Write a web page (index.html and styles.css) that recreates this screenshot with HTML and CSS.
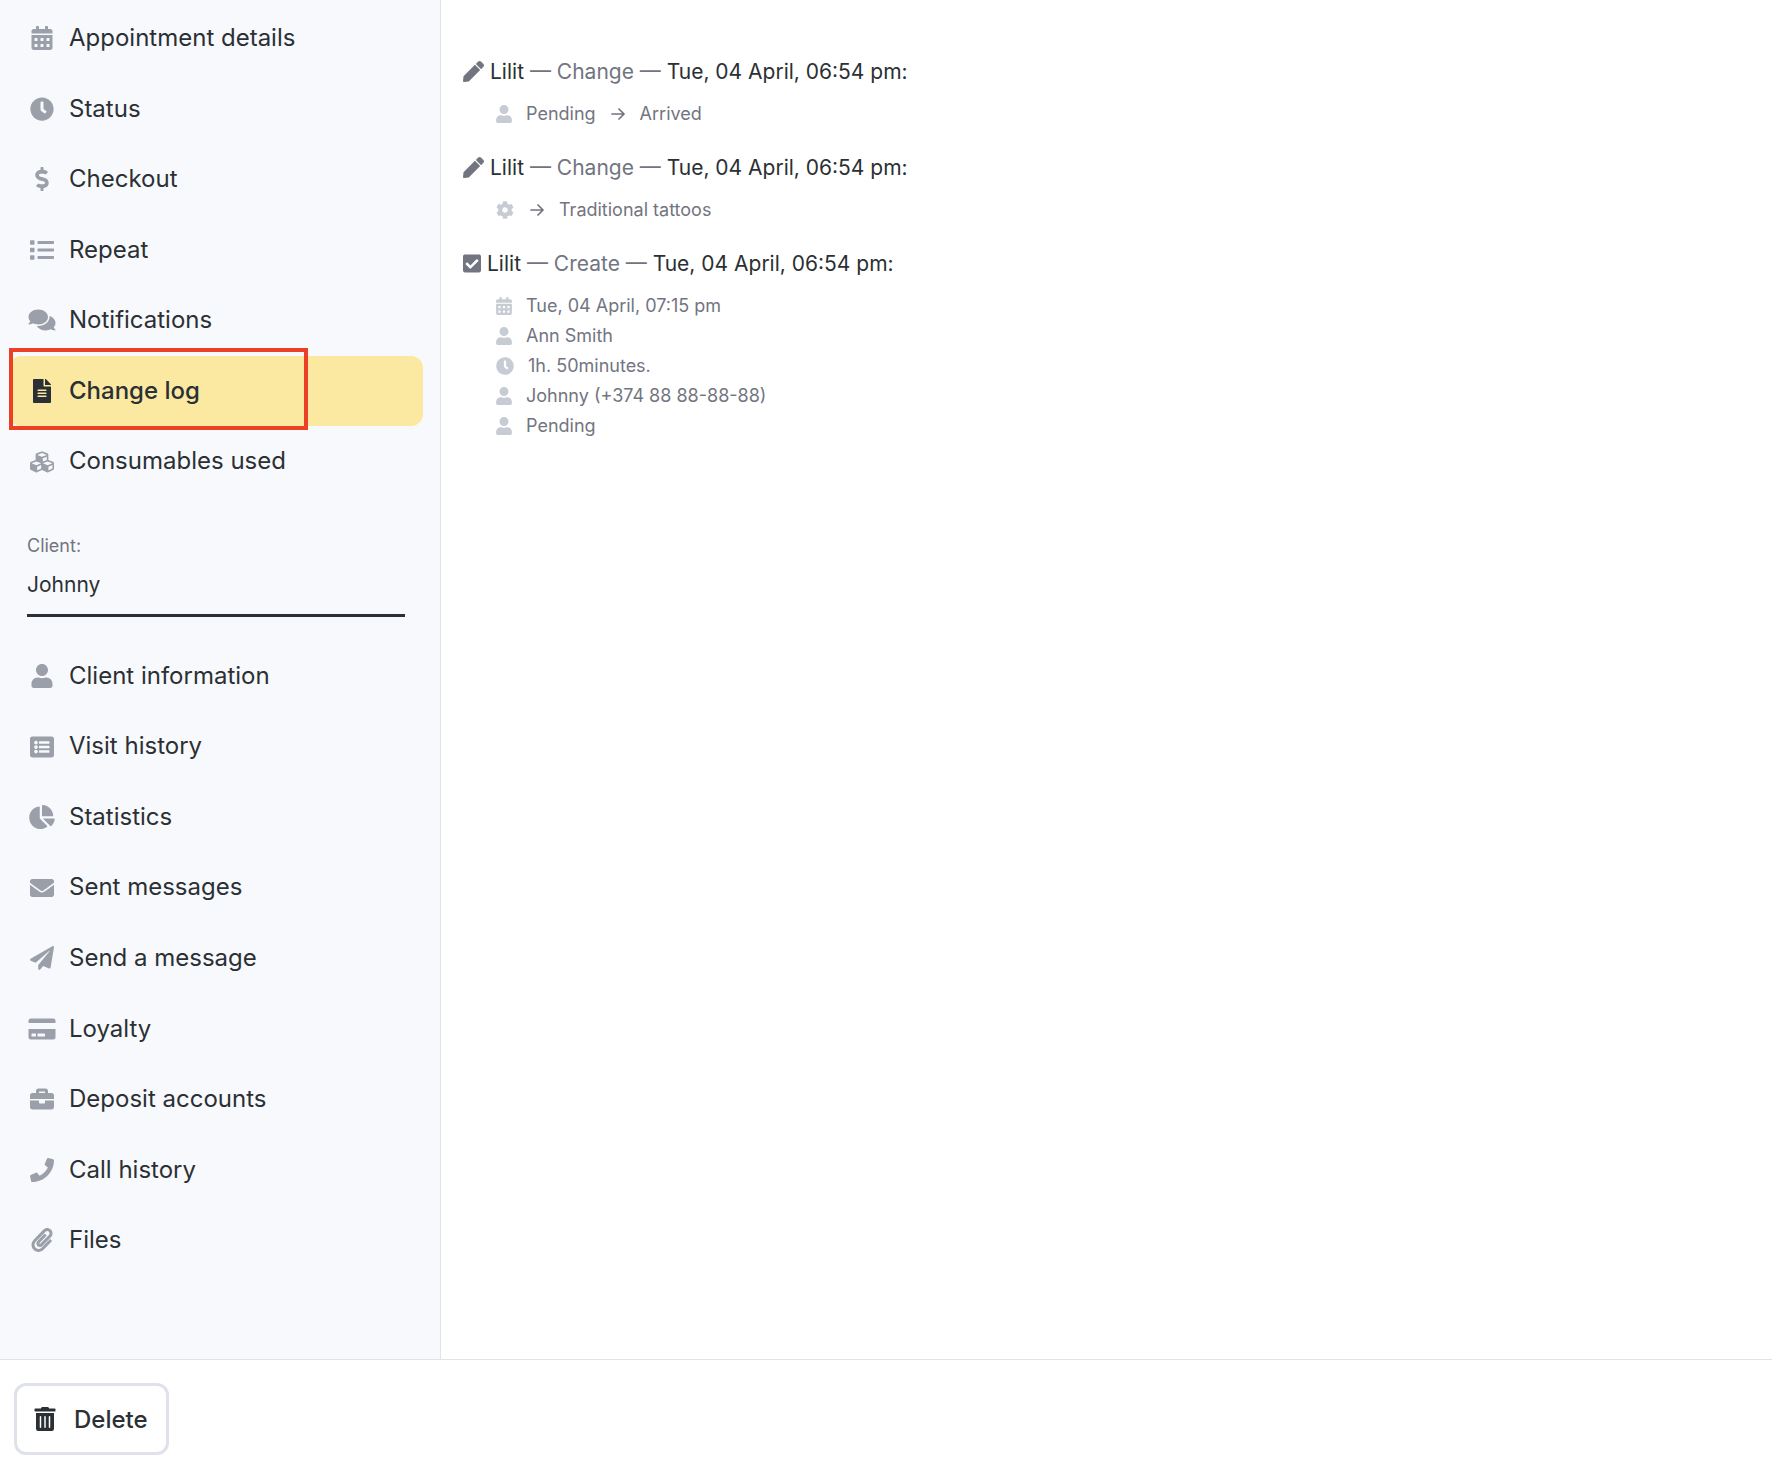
FILE: index.html
```html
<!DOCTYPE html>
<html lang="en">
<head>
  <meta charset="utf-8">
  <meta name="viewport" content="width=device-width, initial-scale=1">
  <title>Appointment - Change log</title>
  <link rel="stylesheet" href="styles.css">
</head>
<body>
  <!-- Icon set -->
  <svg class="sprite" aria-hidden="true">
    <symbol id="calendar" viewBox="0 0 448 512"><path d="M0 464c0 26.500 21.500 48 48 48h352c26.500 0 48-21.500 48-48V192H0v272zm320-196c0-6.600 5.400-12 12-12h40c6.600 0 12 5.400 12 12v40c0 6.600-5.400 12-12 12h-40c-6.600 0-12-5.400-12-12v-40zm0 128c0-6.600 5.400-12 12-12h40c6.600 0 12 5.400 12 12v40c0 6.600-5.400 12-12 12h-40c-6.600 0-12-5.400-12-12v-40zM192 268c0-6.600 5.400-12 12-12h40c6.600 0 12 5.400 12 12v40c0 6.600-5.400 12-12 12h-40c-6.600 0-12-5.400-12-12v-40zm0 128c0-6.600 5.400-12 12-12h40c6.600 0 12 5.400 12 12v40c0 6.600-5.400 12-12 12h-40c-6.600 0-12-5.400-12-12v-40zM64 268c0-6.600 5.400-12 12-12h40c6.600 0 12 5.400 12 12v40c0 6.600-5.400 12-12 12H76c-6.600 0-12-5.400-12-12v-40zm0 128c0-6.600 5.400-12 12-12h40c6.600 0 12 5.400 12 12v40c0 6.600-5.400 12-12 12H76c-6.600 0-12-5.400-12-12v-40zM400 64h-48V16c0-8.800-7.200-16-16-16h-32c-8.800 0-16 7.200-16 16v48H160V16c0-8.800-7.200-16-16-16h-32c-8.800 0-16 7.200-16 16v48H48C21.500 64 0 85.500 0 112v48h448v-48c0-26.500-21.500-48-48-48z"/></symbol>
    <symbol id="clock" viewBox="0 0 512 512"><path d="M256,8C119,8,8,119,8,256S119,504,256,504,504,393,504,256,393,8,256,8Zm92.490,313h0l-20,25a16,16,0,0,1-22.490,2.500h0l-67-49.720a40,40,0,0,1-15-31.230V112a16,16,0,0,1,16-16h32a16,16,0,0,1,16,16V256l58,42.500A16,16,0,0,1,348.490,321Z"/></symbol>
    <symbol id="dollar" viewBox="0 0 288 512"><path d="M209.200 233.400l-108-31.600C88.700 198.200 80 186.500 80 173.500c0-16.300 13.200-29.500 29.500-29.500h66.300c12.200 0 24.200 3.700 34.200 10.500 6.100 4.100 14.300 3.100 19.500-2l34.800-34c7.100-6.900 6.100-18.400-1.800-24.500C238 74.800 207.400 64.100 176 64V16c0-8.800-7.200-16-16-16h-32c-8.800 0-16 7.200-16 16v48h-2.500C45.800 64-5.400 118.700.5 183.600c4.200 46.100 39.400 83.600 83.800 96.600l102.500 30c12.500 3.700 21.200 15.300 21.200 28.300 0 16.300-13.200 29.500-29.500 29.500h-66.300C100 368 88 364.300 78 357.500c-6.100-4.100-14.300-3.100-19.500 2l-34.800 34c-7.100 6.900-6.100 18.400 1.800 24.500 24.500 19.200 55.100 29.900 86.500 30v48c0 8.800 7.200 16 16 16h32c8.800 0 16-7.200 16-16v-48.200c46.600-.9 90.300-28.600 105.700-72.700 21.500-61.600-14.600-124.800-72.500-141.700z"/></symbol>
    <symbol id="list" viewBox="0 0 512 512"><path d="M80 368H16a16 16 0 0 0-16 16v64a16 16 0 0 0 16 16h64a16 16 0 0 0 16-16v-64a16 16 0 0 0-16-16zm0-320H16A16 16 0 0 0 0 64v64a16 16 0 0 0 16 16h64a16 16 0 0 0 16-16V64a16 16 0 0 0-16-16zm0 160H16a16 16 0 0 0-16 16v64a16 16 0 0 0 16 16h64a16 16 0 0 0 16-16v-64a16 16 0 0 0-16-16zm416 176H176a16 16 0 0 0-16 16v32a16 16 0 0 0 16 16h320a16 16 0 0 0 16-16v-32a16 16 0 0 0-16-16zm0-320H176a16 16 0 0 0-16 16v32a16 16 0 0 0 16 16h320a16 16 0 0 0 16-16V80a16 16 0 0 0-16-16zm0 160H176a16 16 0 0 0-16 16v32a16 16 0 0 0 16 16h320a16 16 0 0 0 16-16v-32a16 16 0 0 0-16-16z"/></symbol>
    <symbol id="comments" viewBox="0 0 576 512"><path d="M416 192c0-88.400-93.100-160-208-160S0 103.600 0 192c0 34.300 14.100 65.900 38 92-13.400 30.200-35.500 54.200-35.800 54.500-2.200 2.300-2.800 5.700-1.500 8.700S4.800 352 8 352c36.600 0 66.900-12.300 88.700-25 32.200 15.700 70.300 25 111.300 25 114.900 0 208-71.600 208-160zm122 220c23.900-26 38-57.700 38-92 0-66.900-53.500-124.200-129.300-148.100.9 6.600 1.300 13.300 1.300 20.100 0 105.900-107.700 192-240 192-10.800 0-21.300-.8-31.700-1.900C207.800 439.600 281.800 480 368 480c41 0 79.100-9.200 111.300-25 21.800 12.700 52.100 25 88.700 25 3.200 0 6.100-1.900 7.300-4.800 1.300-2.900.7-6.300-1.500-8.700-.3-.3-22.400-24.200-35.800-54.500z"/></symbol>
    <symbol id="file" viewBox="0 0 384 512"><path d="M224 136V0H24C10.700 0 0 10.700 0 24v464c0 13.300 10.700 24 24 24h336c13.300 0 24-10.700 24-24V160H248c-13.200 0-24-10.800-24-24zm64 236c0 6.600-5.400 12-12 12H108c-6.600 0-12-5.400-12-12v-8c0-6.600 5.400-12 12-12h168c6.600 0 12 5.400 12 12v8zm0-64c0 6.600-5.400 12-12 12H108c-6.600 0-12-5.400-12-12v-8c0-6.600 5.400-12 12-12h168c6.600 0 12 5.400 12 12v8zm0-72v8c0 6.600-5.400 12-12 12H108c-6.600 0-12-5.400-12-12v-8c0-6.600 5.400-12 12-12h168c6.600 0 12 5.400 12 12zm96-114.100v6.100H256V0h6.100c6.400 0 12.500 2.500 17 7l97.900 98c4.500 4.500 7 10.600 7 16.900z"/></symbol>
    <symbol id="cubes" viewBox="0 0 512 512"><path d="M488.600 250.200L392 214V105.500c0-15-9.300-28.400-23.400-33.700l-100-37.500c-8.100-3.100-17.100-3.100-25.300 0l-100 37.500c-14.100 5.300-23.400 18.700-23.400 33.700V214l-96.600 36.200C9.300 255.500 0 268.900 0 283.900V394c0 13.600 7.700 26.100 19.900 32.200l100 50c10.100 5.100 22.100 5.100 32.200 0l103.900-52 103.900 52c10.100 5.100 22.100 5.100 32.200 0l100-50c12.200-6.100 19.900-18.600 19.900-32.200V283.900c0-15-9.300-28.400-23.400-33.700zM358 214.800l-85 31.900v-68.200l85-37v73.300zM154 104.100l102-38.200 102 38.200v.6l-102 41.400-102-41.400v-.6zm84 291.100l-85 42.500v-79.100l85-38.800v75.400zm0-112l-102 41.400-102-41.400v-.6l102-38.200 102 38.200v.6zm240 112l-85 42.500v-79.100l85-38.800v75.400zm0-112l-102 41.400-102-41.400v-.6l102-38.200 102 38.200v.6z"/></symbol>
    <symbol id="user" viewBox="0 0 448 512"><path d="M224 256c70.700 0 128-57.300 128-128S294.700 0 224 0 96 57.300 96 128s57.300 128 128 128zm89.600 32h-16.700c-22.200 10.200-46.900 16-72.900 16s-50.600-5.800-72.900-16h-16.700C60.200 288 0 348.200 0 422.400V464c0 26.500 21.500 48 48 48h352c26.500 0 48-21.500 48-48v-41.600c0-74.200-60.200-134.400-134.400-134.400z"/></symbol>
    <symbol id="list-alt" viewBox="0 0 512 512"><path d="M464 480H48c-26.510 0-48-21.490-48-48V80c0-26.510 21.490-48 48-48h416c26.510 0 48 21.490 48 48v352c0 26.510-21.490 48-48 48zM128 120c-22.091 0-40 17.909-40 40s17.909 40 40 40 40-17.909 40-40-17.909-40-40-40zm0 96c-22.091 0-40 17.909-40 40s17.909 40 40 40 40-17.909 40-40-17.909-40-40-40zm0 96c-22.091 0-40 17.909-40 40s17.909 40 40 40 40-17.909 40-40-17.909-40-40-40zm288-136v-32c0-6.627-5.373-12-12-12H204c-6.627 0-12 5.373-12 12v32c0 6.627 5.373 12 12 12h200c6.627 0 12-5.373 12-12zm0 96v-32c0-6.627-5.373-12-12-12H204c-6.627 0-12 5.373-12 12v32c0 6.627 5.373 12 12 12h200c6.627 0 12-5.373 12-12zm0 96v-32c0-6.627-5.373-12-12-12H204c-6.627 0-12 5.373-12 12v32c0 6.627 5.373 12 12 12h200c6.627 0 12-5.373 12-12z"/></symbol>
    <symbol id="chart" viewBox="0 0 544 512"><path d="M527.790 288H290.500l158.030 158.030c6.040 6.040 15.980 6.530 22.190.68 38.700-36.460 65.320-85.610 73.130-140.860 1.340-9.460-6.510-17.850-16.060-17.850zm-15.830-64.800C503.720 103.740 408.260 8.280 288.800.04 279.680-.59 272 7.100 272 16.240V240h223.770c9.140 0 16.820-7.680 16.190-16.800zM224 288V50.710c0-9.550-8.390-17.400-17.840-16.060C86.990 51.490-4.100 155.600.14 280.370 4.500 408.510 114.830 513.590 243.030 511.980c50.400-.63 96.970-16.870 135.260-44.030 7.900-5.600 8.420-17.230 1.570-24.080L224 288z"/></symbol>
    <symbol id="envelope" viewBox="0 0 512 512"><path d="M502.300 190.800c3.900-3.100 9.700-.2 9.700 4.700V400c0 26.500-21.500 48-48 48H48c-26.500 0-48-21.500-48-48V195.600c0-5 5.700-7.800 9.700-4.700 22.400 17.400 52.100 39.500 154.100 113.600 21.100 15.400 56.700 47.800 92.200 47.600 35.700.3 72-32.800 92.300-47.600 102-74.100 131.600-96.300 154-113.700zM256 320c23.200.4 56.600-29.200 73.400-41.400 132.700-96.300 142.800-104.700 173.400-128.700 5.800-4.500 9.200-11.500 9.200-18.900v-19c0-26.500-21.500-48-48-48H48c-26.500 0-48 21.500-48 48v19c0 7.400 3.400 14.300 9.200 18.900 30.600 23.900 40.700 32.400 173.400 128.700 16.800 12.200 50.200 41.800 73.400 41.400z"/></symbol>
    <symbol id="plane" viewBox="0 0 512 512"><path d="M476 3.200L12.500 270.600c-18.100 10.400-15.800 35.600 2.200 43.200L121 358.400l287.300-253.200c5.500-4.900 13.300 2.600 8.600 8.300L176 407v80.500c0 23.600 28.500 32.900 42.500 15.800L282 426l124.600 52.200c14.200 6 30.400-2.900 33-18.200l72-432C515 7.800 493.300-6.800 476 3.200z"/></symbol>
    <symbol id="card" viewBox="0 0 576 512"><path d="M0 432c0 26.500 21.500 48 48 48h480c26.500 0 48-21.500 48-48V256H0v176zm192-68c0-6.600 5.400-12 12-12h136c6.600 0 12 5.400 12 12v40c0 6.600-5.400 12-12 12H204c-6.600 0-12-5.400-12-12v-40zm-128 0c0-6.600 5.400-12 12-12h72c6.600 0 12 5.400 12 12v40c0 6.600-5.400 12-12 12H76c-6.600 0-12-5.400-12-12v-40zM576 80v48H0V80c0-26.500 21.500-48 48-48h480c26.500 0 48 21.500 48 48z"/></symbol>
    <symbol id="briefcase" viewBox="0 0 512 512"><path d="M320 336c0 8.840-7.160 16-16 16h-96c-8.840 0-16-7.160-16-16v-48H0v144c0 25.600 22.400 48 48 48h416c25.600 0 48-22.400 48-48V288H320v48zm144-208h-80V80c0-25.600-22.400-48-48-48H176c-25.600 0-48 22.400-48 48v48H48c-25.600 0-48 22.400-48 48v80h512v-80c0-25.600-22.400-48-48-48zm-144 0H192V96h128v32z"/></symbol>
    <symbol id="phone" viewBox="0 0 512 512"><path d="M493.400 24.600l-104-24c-11.300-2.600-22.900 3.300-27.500 13.900l-48 112c-4.200 9.800-1.400 21.300 6.900 28l60.600 49.600c-36 76.700-98.900 140.500-177.200 177.200l-49.600-60.600c-6.800-8.300-18.200-11.100-28-6.900l-112 48C3.900 366.500-2 378.100.6 389.400l24 104C27.100 504.200 36.700 512 48 512c256.100 0 464-207.500 464-464 0-11.200-7.700-20.900-18.600-23.400z"/></symbol>
    <symbol id="paperclip" viewBox="0 0 448 512"><path d="M43.246 466.142c-58.430-60.289-57.341-157.511 1.386-217.581L254.392 34c44.316-45.332 116.351-45.336 160.671 0 43.890 44.894 43.943 117.329 0 162.276L232.214 383.128c-29.855 30.537-78.633 30.111-107.982-.998-28.275-29.970-27.368-77.473 1.452-106.953l143.743-146.835c6.182-6.314 16.312-6.422 22.626-.241l22.861 22.379c6.315 6.182 6.422 16.312.241 22.626L171.427 319.927c-4.932 5.045-5.236 13.428-.648 18.292 4.372 4.634 11.245 4.711 15.688.165l182.849-186.851c19.613-20.062 19.613-52.725-.011-72.798-19.189-19.627-49.957-19.637-69.154 0L90.390 293.295c-34.763 35.560-35.299 93.120-1.191 128.313 34.010 35.093 88.985 35.137 123.058.286l172.060-175.999c6.177-6.319 16.307-6.433 22.626-.256l22.877 22.364c6.319 6.177 6.434 16.307.256 22.626l-172.060 175.998c-59.576 60.938-155.943 60.216-214.770-.485z"/></symbol>
    <symbol id="trash" viewBox="0 0 448 512"><path d="M32 464a48 48 0 0 0 48 48h288a48 48 0 0 0 48-48V128H32zm272-256a16 16 0 0 1 32 0v224a16 16 0 0 1-32 0zm-96 0a16 16 0 0 1 32 0v224a16 16 0 0 1-32 0zm-96 0a16 16 0 0 1 32 0v224a16 16 0 0 1-32 0zM432 32H312l-9.400-18.700A24 24 0 0 0 281.100 0H166.800a23.720 23.720 0 0 0-21.400 13.300L136 32H16A16 16 0 0 0 0 48v32a16 16 0 0 0 16 16h416a16 16 0 0 0 16-16V48a16 16 0 0 0-16-16z"/></symbol>
    <symbol id="pen" viewBox="0 0 512 512"><path d="M290.740 93.240l128.020 128.020-277.990 277.990-114.140 12.600C11.350 513.540-1.560 500.620.14 485.340l12.700-114.220 277.900-277.880zm207.200-19.060l-60.110-60.110c-18.750-18.750-49.160-18.750-67.910 0l-56.550 56.550 128.020 128.020 56.550-56.550c18.750-18.760 18.750-49.160 0-67.910z"/></symbol>
    <symbol id="check" viewBox="0 0 448 512"><path d="M400 480H48c-26.510 0-48-21.490-48-48V80c0-26.510 21.490-48 48-48h352c26.510 0 48 21.490 48 48v352c0 26.510-21.490 48-48 48zm-204.686-98.059l184-184c6.248-6.248 6.248-16.379 0-22.627l-22.627-22.627c-6.248-6.248-16.379-6.249-22.628 0L184 302.745l-70.059-70.059c-6.248-6.248-16.379-6.248-22.628 0l-22.627 22.627c-6.248 6.248-6.248 16.379 0 22.627l104 104c6.249 6.250 16.379 6.250 22.628.001z"/></symbol>
    <symbol id="cog" viewBox="0 0 512 512"><path d="M487.400 315.700l-42.600-24.600c4.300-23.200 4.300-47 0-70.200l42.600-24.600c4.900-2.800 7.100-8.600 5.500-14-11.100-35.600-30-67.800-54.700-94.600-3.800-4.100-10-5.100-14.800-2.300L380.800 110c-17.900-15.400-38.500-27.300-60.800-35.100V25.800c0-5.600-3.900-10.500-9.400-11.700-36.700-8.200-74.300-7.800-109.200 0-5.500 1.200-9.400 6.100-9.400 11.700V75c-22.200 7.900-42.800 19.800-60.800 35.100L88.700 85.500c-4.900-2.800-11-1.900-14.800 2.300-24.700 26.700-43.600 58.900-54.700 94.600-1.700 5.400.6 11.200 5.500 14L67.300 221c-4.300 23.200-4.300 47 0 70.200l-42.600 24.600c-4.900 2.800-7.100 8.600-5.500 14 11.100 35.600 30 67.800 54.700 94.600 3.800 4.100 10 5.100 14.800 2.300l42.600-24.600c17.900 15.400 38.500 27.300 60.800 35.100v49.200c0 5.600 3.900 10.500 9.400 11.700 36.700 8.200 74.300 7.800 109.200 0 5.500-1.200 9.400-6.100 9.400-11.700v-49.200c22.200-7.900 42.800-19.800 60.800-35.100l42.600 24.600c4.900 2.800 11 1.900 14.800-2.300 24.700-26.700 43.600-58.900 54.700-94.600 1.500-5.500-.7-11.300-5.600-14.100zM256 336c-44.100 0-80-35.900-80-80s35.900-80 80-80 80 35.900 80 80-35.900 80-80 80z"/></symbol>
    <symbol id="arrow" viewBox="0 0 14 18"><path d="M1 9h12M8 4l5 5-5 5" fill="none" stroke="currentColor" stroke-width="1.700" stroke-linecap="round" stroke-linejoin="round"/></symbol>
  </svg>

  <div class="layout">
    <!-- Sidebar -->
    <aside class="sidebar">
      <nav class="menu">
        <a class="menu-item" href="#"><svg class="menu-icon"><use href="#calendar"/></svg>Appointment details</a>
        <a class="menu-item" href="#"><svg class="menu-icon"><use href="#clock"/></svg>Status</a>
        <a class="menu-item" href="#"><svg class="menu-icon"><use href="#dollar"/></svg>Checkout</a>
        <a class="menu-item" href="#"><svg class="menu-icon"><use href="#list"/></svg>Repeat</a>
        <a class="menu-item" href="#"><svg class="menu-icon"><use href="#comments"/></svg>Notifications</a>
        <a class="menu-item active" href="#"><svg class="menu-icon"><use href="#file"/></svg>Change log<span class="marker"></span></a>
        <a class="menu-item" href="#"><svg class="menu-icon"><use href="#cubes"/></svg>Consumables used</a>
      </nav>

      <div class="client">
        <label class="client-label" for="client">Client:</label>
        <input class="client-input" id="client" type="text" value="Johnny">
      </div>

      <nav class="menu">
        <a class="menu-item" href="#"><svg class="menu-icon"><use href="#user"/></svg>Client information</a>
        <a class="menu-item" href="#"><svg class="menu-icon"><use href="#list-alt"/></svg>Visit history</a>
        <a class="menu-item" href="#"><svg class="menu-icon"><use href="#chart"/></svg>Statistics</a>
        <a class="menu-item" href="#"><svg class="menu-icon"><use href="#envelope"/></svg>Sent messages</a>
        <a class="menu-item" href="#"><svg class="menu-icon"><use href="#plane"/></svg>Send a message</a>
        <a class="menu-item" href="#"><svg class="menu-icon"><use href="#card"/></svg>Loyalty</a>
        <a class="menu-item" href="#"><svg class="menu-icon"><use href="#briefcase"/></svg>Deposit accounts</a>
        <a class="menu-item" href="#"><svg class="menu-icon"><use href="#phone"/></svg>Call history</a>
        <a class="menu-item" href="#"><svg class="menu-icon"><use href="#paperclip"/></svg>Files</a>
      </nav>
    </aside>

    <!-- Change log -->
    <main class="log">
      <section class="entry">
        <p class="entry-title"><svg class="title-icon"><use href="#pen"/></svg><span>Lilit <span class="muted">— Change —</span> Tue, 04 April, 06:54 pm:</span></p>
        <ul class="entry-rows">
          <li class="row"><svg class="row-icon"><use href="#user"/></svg>Pending<svg class="arrow"><use href="#arrow"/></svg>Arrived</li>
        </ul>
      </section>

      <section class="entry">
        <p class="entry-title"><svg class="title-icon"><use href="#pen"/></svg><span>Lilit <span class="muted">— Change —</span> Tue, 04 April, 06:54 pm:</span></p>
        <ul class="entry-rows">
          <li class="row"><svg class="row-icon wide"><use href="#cog"/></svg><svg class="arrow first"><use href="#arrow"/></svg>Traditional tattoos</li>
        </ul>
      </section>

      <section class="entry">
        <p class="entry-title"><svg class="title-icon narrow"><use href="#check"/></svg><span>Lilit <span class="muted">— Create —</span> Tue, 04 April, 06:54 pm:</span></p>
        <ul class="entry-rows">
          <li class="row"><svg class="row-icon"><use href="#calendar"/></svg>Tue, 04 April, 07:15 pm</li>
          <li class="row"><svg class="row-icon"><use href="#user"/></svg>Ann Smith</li>
          <li class="row"><svg class="row-icon wide"><use href="#clock"/></svg>1h. 50minutes.</li>
          <li class="row"><svg class="row-icon"><use href="#user"/></svg>Johnny (+374 88 88-88-88)</li>
          <li class="row"><svg class="row-icon"><use href="#user"/></svg>Pending</li>
        </ul>
      </section>
    </main>
  </div>

  <footer class="footer">
    <button class="delete-button" type="button"><svg class="menu-icon"><use href="#trash"/></svg>Delete</button>
  </footer>
</body>
</html>
```
FILE: styles.css
```css
* {
  box-sizing: border-box;
}

body {
  display: flex;
  flex-direction: column;
  min-height: 100vh;
  margin: 0;
  font-family: Inter, sans-serif;
  color: #2b3034;
  background: #fff;
}

svg {
  flex: none;
  fill: currentColor;
}

.sprite {
  display: none;
}

.layout {
  display: flex;
  flex: 1;
}

/* Sidebar */
.sidebar {
  flex: 0 0 441px;
  padding: 3px 17px 60px 9px;
  background: #f8f9fd;
  border-right: 1px solid #e1e3e6;
}

.menu-item {
  position: relative;
  display: flex;
  align-items: center;
  gap: 12px;
  padding: 18px;
  border-radius: 12px;
  font-size: 24px;
  line-height: 1.44;
  color: inherit;
  text-decoration: none;
}

.menu-icon {
  width: 30px;
  height: 24px;
}

.menu-item .menu-icon {
  color: #9a9fa9;
}

.menu-item.active {
  background: #fbe9a2;
  font-weight: 500;
}

.menu-item.active .menu-icon {
  color: #2b3034;
}

.marker {
  position: absolute;
  top: -8px;
  left: 0;
  width: 299px;
  height: 82px;
  border: 4px solid #eb4026;
}

.client {
  margin: 37px 18px 24px;
}

.client-label {
  display: block;
  font-size: 18px;
  line-height: 24px;
  color: #72757f;
}

.client-input {
  display: block;
  width: 100%;
  padding: 11px 0 13px;
  border: none;
  border-bottom: 3px solid #2b3034;
  border-radius: 0;
  background: none;
  font-family: inherit;
  font-size: 21px;
  line-height: 32px;
  color: inherit;
  outline: none;
}

/* Change log */
.log {
  flex: 1;
  padding: 57px 22px;
}

.entry {
  margin-bottom: 24px;
}

.entry-title {
  display: flex;
  align-items: center;
  gap: 6px;
  margin: 0 0 12px;
  font-size: 21px;
  line-height: 30px;
}

.title-icon {
  width: 21px;
  height: 21px;
  margin-bottom: 2px;
  color: #72757f;
}

.title-icon.narrow {
  width: 18px;
}

.muted {
  color: #72757f;
}

.entry-rows {
  margin: 0;
  padding: 0 0 0 33px;
  list-style: none;
}

.row {
  display: flex;
  align-items: center;
  font-size: 18px;
  line-height: 30px;
  color: #72757f;
}

.row-icon {
  width: 16px;
  height: 18px;
  margin-right: 14px;
  color: #c7cbd3;
}

.row-icon.wide {
  width: 18px;
}

.arrow {
  width: 14px;
  height: 18px;
  margin: 0 15px;
}

.arrow.first {
  margin-left: 2px;
}

/* Footer */
.footer {
  padding: 23px 14px 11px;
  border-top: 1px solid #e1e3e6;
}

.delete-button {
  display: flex;
  align-items: center;
  gap: 14px;
  height: 72px;
  padding: 0 18px 0 13px;
  border: 3px solid #dfe2ea;
  border-radius: 12px;
  background: #fff;
  font-family: inherit;
  font-size: 24px;
  font-weight: 500;
  color: inherit;
  cursor: pointer;
}
```
